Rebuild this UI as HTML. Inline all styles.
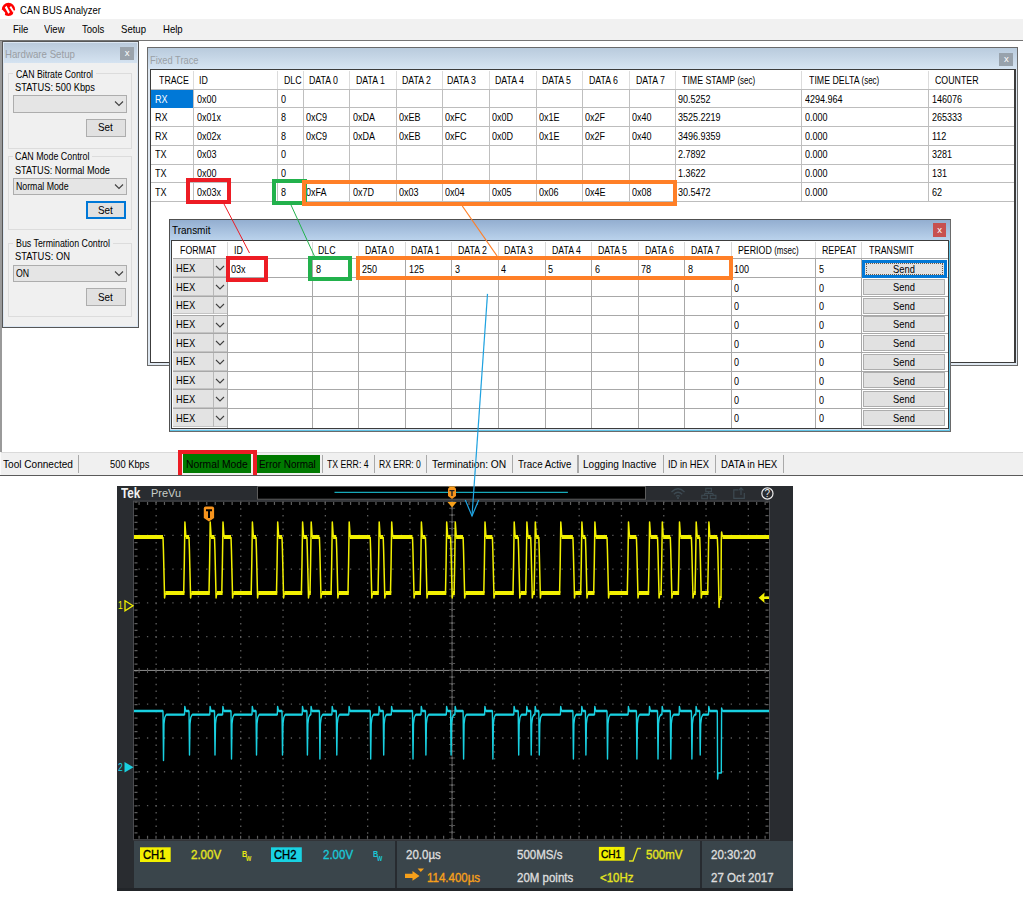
<!DOCTYPE html>
<html><head><meta charset="utf-8"><style>
html,body{margin:0;padding:0;width:1023px;height:899px;overflow:hidden;background:#fff;position:relative}
.t{position:absolute;white-space:nowrap;line-height:1;transform-origin:0 0;font-family:'Liberation Sans',sans-serif}
.r{position:absolute}
</style></head><body>
<div class="r" style="left:0.0px;top:0.0px;width:1023.0px;height:19.0px;background:#fff"></div>
<svg class="r" style="left:0;top:0" width="20" height="20" viewBox="0 0 20 20"><circle cx="8.45" cy="9.4" r="6.6" fill="#f00"/><g fill="#fff"><path d="M4.8,7.4 L6.5,5.8 L9.9,12.3 L8.4,13.7 Z"/><path d="M9.5,7.2 L11.1,5.9 L14.3,11.3 L13,12.4 Z"/><path d="M0.5,10.3 L2.4,9.8 L5.2,12.8 L4.6,16.5 L0.5,16.5 Z"/><path d="M14.6,10.2 L16.5,9.6 L16.5,16.5 L12.6,16.5 L13.2,12.6 Z"/></g></svg>
<div class="t" style="left:20.0px;top:5.3px;font-size:10.5px;transform:scaleX(0.9);color:#000;font-weight:normal;">CAN BUS Analyzer</div>
<div class="r" style="left:0.0px;top:19.0px;width:1023.0px;height:21.0px;background:#f1f1f1"></div>
<div class="t" style="left:12.5px;top:23.8px;font-size:11px;transform:scaleX(0.87);color:#000;font-weight:normal;">File</div>
<div class="t" style="left:44.0px;top:23.8px;font-size:11px;transform:scaleX(0.87);color:#000;font-weight:normal;">View</div>
<div class="t" style="left:81.5px;top:23.8px;font-size:11px;transform:scaleX(0.87);color:#000;font-weight:normal;">Tools</div>
<div class="t" style="left:121.0px;top:23.8px;font-size:11px;transform:scaleX(0.87);color:#000;font-weight:normal;">Setup</div>
<div class="t" style="left:162.8px;top:23.8px;font-size:11px;transform:scaleX(0.87);color:#000;font-weight:normal;">Help</div>
<div class="r" style="left:0.0px;top:40.0px;width:1023.0px;height:1.0px;background:#747474"></div>
<div class="r" style="left:0.0px;top:41.0px;width:1023.0px;height:411.0px;background:#fff"></div>
<div class="r" style="left:0.0px;top:41.0px;width:2.0px;height:411.0px;background:#9a9a9a"></div>
<div class="r" style="left:1.8px;top:41.0px;width:137.2px;height:286.8px;background:#f0f0f0;border:1px solid #565656;box-sizing:border-box"></div>
<div class="r" style="left:2.8px;top:42.0px;width:135.2px;height:284.8px;border:1px solid #dce7f3;border-top-width:1.2px;box-sizing:border-box"></div>
<div class="r" style="left:3.8px;top:43.2px;width:133.2px;height:20.3px;background:linear-gradient(#bacadb,#d5e3f1)"></div>
<div class="t" style="left:4.8px;top:48.8px;font-size:11px;transform:scaleX(0.88);color:#9a9ea3;font-weight:normal;">Hardware Setup</div>
<div class="r" style="left:120.0px;top:47.0px;width:13.5px;height:13.0px;background:#9aa3ac"></div>
<div class="t" style="left:124.8px;top:48.1px;font-size:9.5px;transform:scaleX(1);color:#fff;font-weight:normal;">x</div>
<div class="r" style="left:8.2px;top:73.4px;width:123.8px;height:75.6px;border:1px solid #dcdcdc;box-sizing:border-box"></div>
<div class="r" style="left:13.0px;top:67.4px;width:82.6px;height:12.0px;background:#f0f0f0"></div>
<div class="t" style="left:15.6px;top:68.6px;font-size:11px;transform:scaleX(0.796895213454075);color:#000;font-weight:normal;">CAN Bitrate Control</div>
<div class="t" style="left:15.3px;top:81.8px;font-size:11px;transform:scaleX(0.8471211118464593);color:#000;font-weight:normal;">STATUS: 500 Kbps</div>
<div class="r" style="left:13.0px;top:95.0px;width:114.0px;height:17.5px;background:#e5e5e5;border:1px solid #adadad;box-sizing:border-box"></div>
<svg class="r" style="left:114px;top:100px" width="10" height="7"><path d="M1 1.5 L5 5.5 L9 1.5" stroke="#404040" stroke-width="1.1" fill="none"/></svg>
<div class="r" style="left:86.0px;top:118.5px;width:40.0px;height:18.0px;background:#e1e1e1;border:1px solid #adadad;box-sizing:border-box"></div>
<div class="t" style="left:97.5px;top:122.3px;font-size:11px;transform:scaleX(0.9);color:#000;font-weight:normal;">Set</div>
<div class="r" style="left:8.2px;top:156.0px;width:123.8px;height:74.0px;border:1px solid #dcdcdc;box-sizing:border-box"></div>
<div class="r" style="left:13.0px;top:150.0px;width:79.3px;height:12.0px;background:#f0f0f0"></div>
<div class="t" style="left:14.8px;top:151.2px;font-size:11px;transform:scaleX(0.8067681895093063);color:#000;font-weight:normal;">CAN Mode Control</div>
<div class="t" style="left:14.8px;top:164.8px;font-size:11px;transform:scaleX(0.8329127811300056);color:#000;font-weight:normal;">STATUS: Normal Mode</div>
<div class="r" style="left:13.0px;top:177.5px;width:114.0px;height:17.5px;background:#e5e5e5;border:1px solid #adadad;box-sizing:border-box"></div>
<div class="t" style="left:16.0px;top:181.1px;font-size:11px;transform:scaleX(0.7965925224798864);color:#000;font-weight:normal;">Normal Mode</div>
<svg class="r" style="left:114px;top:182.5px" width="10" height="7"><path d="M1 1.5 L5 5.5 L9 1.5" stroke="#404040" stroke-width="1.1" fill="none"/></svg>
<div class="r" style="left:86.0px;top:201.0px;width:40.0px;height:18.0px;background:#e1e1e1;border:2px solid #0078d7;box-sizing:border-box"></div>
<div class="t" style="left:97.5px;top:204.8px;font-size:11px;transform:scaleX(0.9);color:#000;font-weight:normal;">Set</div>
<div class="r" style="left:8.2px;top:243.2px;width:123.8px;height:74.0px;border:1px solid #dcdcdc;box-sizing:border-box"></div>
<div class="r" style="left:13.0px;top:237.2px;width:99.6px;height:12.0px;background:#f0f0f0"></div>
<div class="t" style="left:15.6px;top:238.4px;font-size:11px;transform:scaleX(0.8018126082900173);color:#000;font-weight:normal;">Bus Termination Control</div>
<div class="t" style="left:14.7px;top:251.4px;font-size:11px;transform:scaleX(0.853954391072295);color:#000;font-weight:normal;">STATUS: ON</div>
<div class="r" style="left:13.0px;top:264.8px;width:114.0px;height:17.5px;background:#e5e5e5;border:1px solid #adadad;box-sizing:border-box"></div>
<div class="t" style="left:16.0px;top:268.4px;font-size:11px;transform:scaleX(0.7965925224798864);color:#000;font-weight:normal;">ON</div>
<svg class="r" style="left:114px;top:269.8px" width="10" height="7"><path d="M1 1.5 L5 5.5 L9 1.5" stroke="#404040" stroke-width="1.1" fill="none"/></svg>
<div class="r" style="left:86.0px;top:288.3px;width:40.0px;height:18.0px;background:#e1e1e1;border:1px solid #adadad;box-sizing:border-box"></div>
<div class="t" style="left:97.5px;top:292.1px;font-size:11px;transform:scaleX(0.9);color:#000;font-weight:normal;">Set</div>
<div class="r" style="left:147.3px;top:47.3px;width:870.5px;height:318.7px;background:#dfe8f1;border:1px solid #6a6a6a;box-sizing:border-box"></div>
<div class="r" style="left:148.3px;top:48.3px;width:868.5px;height:21.0px;background:linear-gradient(#b9cbdd,#d6e4f2)"></div>
<div class="t" style="left:150.0px;top:54.8px;font-size:11px;transform:scaleX(0.8437075292198967);color:#9aa0a6;font-weight:normal;">Fixed Trace</div>
<div class="r" style="left:999.3px;top:52.7px;width:13.6px;height:13.0px;background:#98a2ac"></div>
<div class="t" style="left:1004.0px;top:53.9px;font-size:9.5px;transform:scaleX(1);color:#fff;font-weight:normal;">x</div>
<div class="r" style="left:149.5px;top:69.3px;width:866.5px;height:293.7px;background:#fff;border:1.5px solid #3c3c3c;border-right-width:2px;box-sizing:border-box"></div>
<div class="r" style="left:192.7px;top:71.0px;width:1.0px;height:18.0px;background:#dcdcdc"></div>
<div class="r" style="left:192.7px;top:89.0px;width:1.0px;height:112.9px;background:#bfbfbf"></div>
<div class="r" style="left:277.1px;top:71.0px;width:1.0px;height:18.0px;background:#dcdcdc"></div>
<div class="r" style="left:277.1px;top:89.0px;width:1.0px;height:112.9px;background:#bfbfbf"></div>
<div class="r" style="left:302.5px;top:71.0px;width:1.0px;height:18.0px;background:#dcdcdc"></div>
<div class="r" style="left:302.5px;top:89.0px;width:1.0px;height:112.9px;background:#bfbfbf"></div>
<div class="r" style="left:349.1px;top:71.0px;width:1.0px;height:18.0px;background:#dcdcdc"></div>
<div class="r" style="left:349.1px;top:89.0px;width:1.0px;height:112.9px;background:#bfbfbf"></div>
<div class="r" style="left:395.7px;top:71.0px;width:1.0px;height:18.0px;background:#dcdcdc"></div>
<div class="r" style="left:395.7px;top:89.0px;width:1.0px;height:112.9px;background:#bfbfbf"></div>
<div class="r" style="left:442.3px;top:71.0px;width:1.0px;height:18.0px;background:#dcdcdc"></div>
<div class="r" style="left:442.3px;top:89.0px;width:1.0px;height:112.9px;background:#bfbfbf"></div>
<div class="r" style="left:488.9px;top:71.0px;width:1.0px;height:18.0px;background:#dcdcdc"></div>
<div class="r" style="left:488.9px;top:89.0px;width:1.0px;height:112.9px;background:#bfbfbf"></div>
<div class="r" style="left:535.5px;top:71.0px;width:1.0px;height:18.0px;background:#dcdcdc"></div>
<div class="r" style="left:535.5px;top:89.0px;width:1.0px;height:112.9px;background:#bfbfbf"></div>
<div class="r" style="left:582.1px;top:71.0px;width:1.0px;height:18.0px;background:#dcdcdc"></div>
<div class="r" style="left:582.1px;top:89.0px;width:1.0px;height:112.9px;background:#bfbfbf"></div>
<div class="r" style="left:628.7px;top:71.0px;width:1.0px;height:18.0px;background:#dcdcdc"></div>
<div class="r" style="left:628.7px;top:89.0px;width:1.0px;height:112.9px;background:#bfbfbf"></div>
<div class="r" style="left:674.8px;top:71.0px;width:1.0px;height:18.0px;background:#dcdcdc"></div>
<div class="r" style="left:674.8px;top:89.0px;width:1.0px;height:112.9px;background:#bfbfbf"></div>
<div class="r" style="left:801.2px;top:71.0px;width:1.0px;height:18.0px;background:#dcdcdc"></div>
<div class="r" style="left:801.2px;top:89.0px;width:1.0px;height:112.9px;background:#bfbfbf"></div>
<div class="r" style="left:928.0px;top:71.0px;width:1.0px;height:18.0px;background:#dcdcdc"></div>
<div class="r" style="left:928.0px;top:89.0px;width:1.0px;height:112.9px;background:#bfbfbf"></div>
<div class="r" style="left:151.0px;top:88.7px;width:863.3px;height:1.0px;background:#bdbdbd"></div>
<div class="r" style="left:151.0px;top:107.4px;width:863.3px;height:1.0px;background:#bdbdbd"></div>
<div class="r" style="left:151.0px;top:126.1px;width:863.3px;height:1.0px;background:#bdbdbd"></div>
<div class="r" style="left:151.0px;top:144.8px;width:863.3px;height:1.0px;background:#bdbdbd"></div>
<div class="r" style="left:151.0px;top:163.5px;width:863.3px;height:1.0px;background:#bdbdbd"></div>
<div class="r" style="left:151.0px;top:182.2px;width:863.3px;height:1.0px;background:#bdbdbd"></div>
<div class="r" style="left:151.0px;top:200.9px;width:863.3px;height:1.0px;background:#bdbdbd"></div>
<div class="t" style="left:158.5px;top:75.1px;font-size:11px;transform:scaleX(0.8);color:#000;font-weight:normal;">TRACE</div>
<div class="t" style="left:199.4px;top:75.1px;font-size:11px;transform:scaleX(0.8);color:#000;font-weight:normal;">ID</div>
<div class="t" style="left:283.9px;top:75.1px;font-size:11px;transform:scaleX(0.8);color:#000;font-weight:normal;">DLC</div>
<div class="t" style="left:308.9px;top:75.1px;font-size:11px;transform:scaleX(0.8);color:#000;font-weight:normal;">DATA 0</div>
<div class="t" style="left:356.2px;top:75.1px;font-size:11px;transform:scaleX(0.8);color:#000;font-weight:normal;">DATA 1</div>
<div class="t" style="left:402.0px;top:75.1px;font-size:11px;transform:scaleX(0.8);color:#000;font-weight:normal;">DATA 2</div>
<div class="t" style="left:446.9px;top:75.1px;font-size:11px;transform:scaleX(0.8);color:#000;font-weight:normal;">DATA 3</div>
<div class="t" style="left:495.0px;top:75.1px;font-size:11px;transform:scaleX(0.8);color:#000;font-weight:normal;">DATA 4</div>
<div class="t" style="left:542.1px;top:75.1px;font-size:11px;transform:scaleX(0.8);color:#000;font-weight:normal;">DATA 5</div>
<div class="t" style="left:588.8px;top:75.1px;font-size:11px;transform:scaleX(0.8);color:#000;font-weight:normal;">DATA 6</div>
<div class="t" style="left:635.5px;top:75.1px;font-size:11px;transform:scaleX(0.8);color:#000;font-weight:normal;">DATA 7</div>
<div class="t" style="left:682.2px;top:75.1px;font-size:11px;transform:scaleX(0.8);color:#000;font-weight:normal;">TIME STAMP <span style="font-size:10px">(sec)</span></div>
<div class="t" style="left:808.6px;top:75.1px;font-size:11px;transform:scaleX(0.8);color:#000;font-weight:normal;">TIME DELTA <span style="font-size:10px">(sec)</span></div>
<div class="t" style="left:935.2px;top:75.1px;font-size:11px;transform:scaleX(0.8);color:#000;font-weight:normal;">COUNTER</div>
<div class="r" style="left:151.3px;top:90.0px;width:41.7px;height:17.5px;background:#0078d7"></div>
<div class="t" style="left:154.5px;top:93.5px;font-size:11px;transform:scaleX(0.82);color:#fff;font-weight:normal;">RX</div>
<div class="t" style="left:196.7px;top:93.5px;font-size:11px;transform:scaleX(0.82);color:#000;font-weight:normal;">0x00</div>
<div class="t" style="left:280.8px;top:93.5px;font-size:11px;transform:scaleX(0.82);color:#000;font-weight:normal;">0</div>
<div class="t" style="left:678.3px;top:93.5px;font-size:11px;transform:scaleX(0.82);color:#000;font-weight:normal;">90.5252</div>
<div class="t" style="left:805.2px;top:93.5px;font-size:11px;transform:scaleX(0.82);color:#000;font-weight:normal;">4294.964</div>
<div class="t" style="left:932.0px;top:93.5px;font-size:11px;transform:scaleX(0.82);color:#000;font-weight:normal;">146076</div>
<div class="t" style="left:154.5px;top:112.2px;font-size:11px;transform:scaleX(0.82);color:#000;font-weight:normal;">RX</div>
<div class="t" style="left:196.7px;top:112.2px;font-size:11px;transform:scaleX(0.82);color:#000;font-weight:normal;">0x01x</div>
<div class="t" style="left:280.8px;top:112.2px;font-size:11px;transform:scaleX(0.82);color:#000;font-weight:normal;">8</div>
<div class="t" style="left:306.2px;top:112.2px;font-size:11px;transform:scaleX(0.82);color:#000;font-weight:normal;">0xC9</div>
<div class="t" style="left:353.1px;top:112.2px;font-size:11px;transform:scaleX(0.82);color:#000;font-weight:normal;">0xDA</div>
<div class="t" style="left:399.2px;top:112.2px;font-size:11px;transform:scaleX(0.82);color:#000;font-weight:normal;">0xEB</div>
<div class="t" style="left:445.0px;top:112.2px;font-size:11px;transform:scaleX(0.82);color:#000;font-weight:normal;">0xFC</div>
<div class="t" style="left:491.9px;top:112.2px;font-size:11px;transform:scaleX(0.82);color:#000;font-weight:normal;">0x0D</div>
<div class="t" style="left:538.7px;top:112.2px;font-size:11px;transform:scaleX(0.82);color:#000;font-weight:normal;">0x1E</div>
<div class="t" style="left:585.4px;top:112.2px;font-size:11px;transform:scaleX(0.82);color:#000;font-weight:normal;">0x2F</div>
<div class="t" style="left:632.1px;top:112.2px;font-size:11px;transform:scaleX(0.82);color:#000;font-weight:normal;">0x40</div>
<div class="t" style="left:678.3px;top:112.2px;font-size:11px;transform:scaleX(0.82);color:#000;font-weight:normal;">3525.2219</div>
<div class="t" style="left:805.2px;top:112.2px;font-size:11px;transform:scaleX(0.82);color:#000;font-weight:normal;">0.000</div>
<div class="t" style="left:932.0px;top:112.2px;font-size:11px;transform:scaleX(0.82);color:#000;font-weight:normal;">265333</div>
<div class="t" style="left:154.5px;top:130.7px;font-size:11px;transform:scaleX(0.82);color:#000;font-weight:normal;">RX</div>
<div class="t" style="left:196.7px;top:130.7px;font-size:11px;transform:scaleX(0.82);color:#000;font-weight:normal;">0x02x</div>
<div class="t" style="left:280.8px;top:130.7px;font-size:11px;transform:scaleX(0.82);color:#000;font-weight:normal;">8</div>
<div class="t" style="left:306.2px;top:130.7px;font-size:11px;transform:scaleX(0.82);color:#000;font-weight:normal;">0xC9</div>
<div class="t" style="left:353.1px;top:130.7px;font-size:11px;transform:scaleX(0.82);color:#000;font-weight:normal;">0xDA</div>
<div class="t" style="left:399.2px;top:130.7px;font-size:11px;transform:scaleX(0.82);color:#000;font-weight:normal;">0xEB</div>
<div class="t" style="left:445.0px;top:130.7px;font-size:11px;transform:scaleX(0.82);color:#000;font-weight:normal;">0xFC</div>
<div class="t" style="left:491.9px;top:130.7px;font-size:11px;transform:scaleX(0.82);color:#000;font-weight:normal;">0x0D</div>
<div class="t" style="left:538.7px;top:130.7px;font-size:11px;transform:scaleX(0.82);color:#000;font-weight:normal;">0x1E</div>
<div class="t" style="left:585.4px;top:130.7px;font-size:11px;transform:scaleX(0.82);color:#000;font-weight:normal;">0x2F</div>
<div class="t" style="left:632.1px;top:130.7px;font-size:11px;transform:scaleX(0.82);color:#000;font-weight:normal;">0x40</div>
<div class="t" style="left:678.3px;top:130.7px;font-size:11px;transform:scaleX(0.82);color:#000;font-weight:normal;">3496.9359</div>
<div class="t" style="left:805.2px;top:130.7px;font-size:11px;transform:scaleX(0.82);color:#000;font-weight:normal;">0.000</div>
<div class="t" style="left:932.0px;top:130.7px;font-size:11px;transform:scaleX(0.82);color:#000;font-weight:normal;">112</div>
<div class="t" style="left:154.5px;top:149.4px;font-size:11px;transform:scaleX(0.82);color:#000;font-weight:normal;">TX</div>
<div class="t" style="left:196.7px;top:149.4px;font-size:11px;transform:scaleX(0.82);color:#000;font-weight:normal;">0x03</div>
<div class="t" style="left:280.8px;top:149.4px;font-size:11px;transform:scaleX(0.82);color:#000;font-weight:normal;">0</div>
<div class="t" style="left:678.3px;top:149.4px;font-size:11px;transform:scaleX(0.82);color:#000;font-weight:normal;">2.7892</div>
<div class="t" style="left:805.2px;top:149.4px;font-size:11px;transform:scaleX(0.82);color:#000;font-weight:normal;">0.000</div>
<div class="t" style="left:932.0px;top:149.4px;font-size:11px;transform:scaleX(0.82);color:#000;font-weight:normal;">3281</div>
<div class="t" style="left:154.5px;top:168.0px;font-size:11px;transform:scaleX(0.82);color:#000;font-weight:normal;">TX</div>
<div class="t" style="left:196.7px;top:168.0px;font-size:11px;transform:scaleX(0.82);color:#000;font-weight:normal;">0x00</div>
<div class="t" style="left:280.8px;top:168.0px;font-size:11px;transform:scaleX(0.82);color:#000;font-weight:normal;">0</div>
<div class="t" style="left:678.3px;top:168.0px;font-size:11px;transform:scaleX(0.82);color:#000;font-weight:normal;">1.3622</div>
<div class="t" style="left:805.2px;top:168.0px;font-size:11px;transform:scaleX(0.82);color:#000;font-weight:normal;">0.000</div>
<div class="t" style="left:932.0px;top:168.0px;font-size:11px;transform:scaleX(0.82);color:#000;font-weight:normal;">131</div>
<div class="t" style="left:154.5px;top:186.6px;font-size:11px;transform:scaleX(0.82);color:#000;font-weight:normal;">TX</div>
<div class="t" style="left:196.7px;top:186.6px;font-size:11px;transform:scaleX(0.82);color:#000;font-weight:normal;">0x03x</div>
<div class="t" style="left:280.8px;top:186.6px;font-size:11px;transform:scaleX(0.82);color:#000;font-weight:normal;">8</div>
<div class="t" style="left:306.2px;top:186.6px;font-size:11px;transform:scaleX(0.82);color:#000;font-weight:normal;">0xFA</div>
<div class="t" style="left:353.1px;top:186.6px;font-size:11px;transform:scaleX(0.82);color:#000;font-weight:normal;">0x7D</div>
<div class="t" style="left:399.2px;top:186.6px;font-size:11px;transform:scaleX(0.82);color:#000;font-weight:normal;">0x03</div>
<div class="t" style="left:445.0px;top:186.6px;font-size:11px;transform:scaleX(0.82);color:#000;font-weight:normal;">0x04</div>
<div class="t" style="left:491.9px;top:186.6px;font-size:11px;transform:scaleX(0.82);color:#000;font-weight:normal;">0x05</div>
<div class="t" style="left:538.7px;top:186.6px;font-size:11px;transform:scaleX(0.82);color:#000;font-weight:normal;">0x06</div>
<div class="t" style="left:585.4px;top:186.6px;font-size:11px;transform:scaleX(0.82);color:#000;font-weight:normal;">0x4E</div>
<div class="t" style="left:632.1px;top:186.6px;font-size:11px;transform:scaleX(0.82);color:#000;font-weight:normal;">0x08</div>
<div class="t" style="left:678.3px;top:186.6px;font-size:11px;transform:scaleX(0.82);color:#000;font-weight:normal;">30.5472</div>
<div class="t" style="left:805.2px;top:186.6px;font-size:11px;transform:scaleX(0.82);color:#000;font-weight:normal;">0.000</div>
<div class="t" style="left:932.0px;top:186.6px;font-size:11px;transform:scaleX(0.82);color:#000;font-weight:normal;">62</div>
<div class="r" style="left:169.0px;top:218.5px;width:782.0px;height:213.5px;background:#cfe0f0;border:1px solid #505050;border-bottom-color:#6a6a6a;border-right-color:#6a6a6a;box-sizing:border-box"></div>
<div class="r" style="left:949.0px;top:240.0px;width:1.0px;height:191.0px;background:#62c4e6"></div>
<div class="r" style="left:170.0px;top:429.8px;width:780.0px;height:1.1px;background:#62c4e6"></div>
<div class="r" style="left:170.0px;top:219.5px;width:780.0px;height:21.0px;background:linear-gradient(#93aed0,#bcd4ed)"></div>
<div class="t" style="left:172.0px;top:225.4px;font-size:11px;transform:scaleX(0.9061946902654867);color:#000;font-weight:normal;">Transmit</div>
<div class="r" style="left:932.8px;top:223.0px;width:13.2px;height:14.0px;background:#c75050"></div>
<div class="t" style="left:937.3px;top:224.7px;font-size:9.5px;transform:scaleX(1);color:#fff;font-weight:normal;">x</div>
<div class="r" style="left:171.3px;top:240.3px;width:777.4px;height:188.7px;background:#fff;border:1.5px solid #3c3c3c;box-sizing:border-box"></div>
<div class="r" style="left:173.0px;top:259.4px;width:54.3px;height:17.7px;background:#e3e3e3;border-bottom:1px solid #c4c4c4;box-sizing:border-box"></div>
<div class="r" style="left:213.0px;top:259.4px;width:1.0px;height:17.7px;background:#b8b8b8"></div>
<div class="t" style="left:176.0px;top:262.9px;font-size:11px;transform:scaleX(0.85);color:#000;font-weight:normal;">HEX</div>
<svg class="r" style="left:215px;top:265.4px" width="10" height="6"><path d="M1 1 L5 5 L9 1" stroke="#404040" stroke-width="1.1" fill="none"/></svg>
<div class="r" style="left:863.4px;top:260.2px;width:81.4px;height:16.1px;background:#e1e1e1;border:1px solid #adadad;box-sizing:border-box"></div>
<div class="t" style="left:892.5px;top:263.3px;font-size:11px;transform:scaleX(0.85);color:#000;font-weight:normal;">Send</div>
<div class="r" style="left:173.0px;top:278.1px;width:54.3px;height:17.7px;background:#e3e3e3;border-bottom:1px solid #c4c4c4;box-sizing:border-box"></div>
<div class="r" style="left:213.0px;top:278.1px;width:1.0px;height:17.7px;background:#b8b8b8"></div>
<div class="t" style="left:176.0px;top:281.6px;font-size:11px;transform:scaleX(0.85);color:#000;font-weight:normal;">HEX</div>
<svg class="r" style="left:215px;top:284.1px" width="10" height="6"><path d="M1 1 L5 5 L9 1" stroke="#404040" stroke-width="1.1" fill="none"/></svg>
<div class="r" style="left:863.4px;top:278.9px;width:81.4px;height:16.1px;background:#e1e1e1;border:1px solid #adadad;box-sizing:border-box"></div>
<div class="t" style="left:892.5px;top:282.0px;font-size:11px;transform:scaleX(0.85);color:#000;font-weight:normal;">Send</div>
<div class="r" style="left:173.0px;top:296.8px;width:54.3px;height:17.7px;background:#e3e3e3;border-bottom:1px solid #c4c4c4;box-sizing:border-box"></div>
<div class="r" style="left:213.0px;top:296.8px;width:1.0px;height:17.7px;background:#b8b8b8"></div>
<div class="t" style="left:176.0px;top:300.3px;font-size:11px;transform:scaleX(0.85);color:#000;font-weight:normal;">HEX</div>
<svg class="r" style="left:215px;top:302.8px" width="10" height="6"><path d="M1 1 L5 5 L9 1" stroke="#404040" stroke-width="1.1" fill="none"/></svg>
<div class="r" style="left:863.4px;top:297.6px;width:81.4px;height:16.1px;background:#e1e1e1;border:1px solid #adadad;box-sizing:border-box"></div>
<div class="t" style="left:892.5px;top:300.7px;font-size:11px;transform:scaleX(0.85);color:#000;font-weight:normal;">Send</div>
<div class="r" style="left:173.0px;top:315.5px;width:54.3px;height:17.7px;background:#e3e3e3;border-bottom:1px solid #c4c4c4;box-sizing:border-box"></div>
<div class="r" style="left:213.0px;top:315.5px;width:1.0px;height:17.7px;background:#b8b8b8"></div>
<div class="t" style="left:176.0px;top:319.0px;font-size:11px;transform:scaleX(0.85);color:#000;font-weight:normal;">HEX</div>
<svg class="r" style="left:215px;top:321.5px" width="10" height="6"><path d="M1 1 L5 5 L9 1" stroke="#404040" stroke-width="1.1" fill="none"/></svg>
<div class="r" style="left:863.4px;top:316.3px;width:81.4px;height:16.1px;background:#e1e1e1;border:1px solid #adadad;box-sizing:border-box"></div>
<div class="t" style="left:892.5px;top:319.4px;font-size:11px;transform:scaleX(0.85);color:#000;font-weight:normal;">Send</div>
<div class="r" style="left:173.0px;top:334.2px;width:54.3px;height:17.7px;background:#e3e3e3;border-bottom:1px solid #c4c4c4;box-sizing:border-box"></div>
<div class="r" style="left:213.0px;top:334.2px;width:1.0px;height:17.7px;background:#b8b8b8"></div>
<div class="t" style="left:176.0px;top:337.7px;font-size:11px;transform:scaleX(0.85);color:#000;font-weight:normal;">HEX</div>
<svg class="r" style="left:215px;top:340.2px" width="10" height="6"><path d="M1 1 L5 5 L9 1" stroke="#404040" stroke-width="1.1" fill="none"/></svg>
<div class="r" style="left:863.4px;top:335.0px;width:81.4px;height:16.1px;background:#e1e1e1;border:1px solid #adadad;box-sizing:border-box"></div>
<div class="t" style="left:892.5px;top:338.1px;font-size:11px;transform:scaleX(0.85);color:#000;font-weight:normal;">Send</div>
<div class="r" style="left:173.0px;top:352.9px;width:54.3px;height:17.7px;background:#e3e3e3;border-bottom:1px solid #c4c4c4;box-sizing:border-box"></div>
<div class="r" style="left:213.0px;top:352.9px;width:1.0px;height:17.7px;background:#b8b8b8"></div>
<div class="t" style="left:176.0px;top:356.4px;font-size:11px;transform:scaleX(0.85);color:#000;font-weight:normal;">HEX</div>
<svg class="r" style="left:215px;top:358.9px" width="10" height="6"><path d="M1 1 L5 5 L9 1" stroke="#404040" stroke-width="1.1" fill="none"/></svg>
<div class="r" style="left:863.4px;top:353.7px;width:81.4px;height:16.1px;background:#e1e1e1;border:1px solid #adadad;box-sizing:border-box"></div>
<div class="t" style="left:892.5px;top:356.8px;font-size:11px;transform:scaleX(0.85);color:#000;font-weight:normal;">Send</div>
<div class="r" style="left:173.0px;top:371.6px;width:54.3px;height:17.7px;background:#e3e3e3;border-bottom:1px solid #c4c4c4;box-sizing:border-box"></div>
<div class="r" style="left:213.0px;top:371.6px;width:1.0px;height:17.7px;background:#b8b8b8"></div>
<div class="t" style="left:176.0px;top:375.1px;font-size:11px;transform:scaleX(0.85);color:#000;font-weight:normal;">HEX</div>
<svg class="r" style="left:215px;top:377.6px" width="10" height="6"><path d="M1 1 L5 5 L9 1" stroke="#404040" stroke-width="1.1" fill="none"/></svg>
<div class="r" style="left:863.4px;top:372.4px;width:81.4px;height:16.1px;background:#e1e1e1;border:1px solid #adadad;box-sizing:border-box"></div>
<div class="t" style="left:892.5px;top:375.5px;font-size:11px;transform:scaleX(0.85);color:#000;font-weight:normal;">Send</div>
<div class="r" style="left:173.0px;top:390.3px;width:54.3px;height:17.7px;background:#e3e3e3;border-bottom:1px solid #c4c4c4;box-sizing:border-box"></div>
<div class="r" style="left:213.0px;top:390.3px;width:1.0px;height:17.7px;background:#b8b8b8"></div>
<div class="t" style="left:176.0px;top:393.8px;font-size:11px;transform:scaleX(0.85);color:#000;font-weight:normal;">HEX</div>
<svg class="r" style="left:215px;top:396.3px" width="10" height="6"><path d="M1 1 L5 5 L9 1" stroke="#404040" stroke-width="1.1" fill="none"/></svg>
<div class="r" style="left:863.4px;top:391.1px;width:81.4px;height:16.1px;background:#e1e1e1;border:1px solid #adadad;box-sizing:border-box"></div>
<div class="t" style="left:892.5px;top:394.2px;font-size:11px;transform:scaleX(0.85);color:#000;font-weight:normal;">Send</div>
<div class="r" style="left:173.0px;top:409.0px;width:54.3px;height:17.7px;background:#e3e3e3;border-bottom:1px solid #c4c4c4;box-sizing:border-box"></div>
<div class="r" style="left:213.0px;top:409.0px;width:1.0px;height:17.7px;background:#b8b8b8"></div>
<div class="t" style="left:176.0px;top:412.5px;font-size:11px;transform:scaleX(0.85);color:#000;font-weight:normal;">HEX</div>
<svg class="r" style="left:215px;top:415.0px" width="10" height="6"><path d="M1 1 L5 5 L9 1" stroke="#404040" stroke-width="1.1" fill="none"/></svg>
<div class="r" style="left:863.4px;top:409.8px;width:81.4px;height:16.1px;background:#e1e1e1;border:1px solid #adadad;box-sizing:border-box"></div>
<div class="t" style="left:892.5px;top:412.9px;font-size:11px;transform:scaleX(0.85);color:#000;font-weight:normal;">Send</div>
<div class="r" style="left:226.8px;top:241.5px;width:1.0px;height:17.1px;background:#d8d8d8"></div>
<div class="r" style="left:226.8px;top:258.6px;width:1.0px;height:169.0px;background:#a8a8a8"></div>
<div class="r" style="left:312.0px;top:241.5px;width:1.0px;height:17.1px;background:#d8d8d8"></div>
<div class="r" style="left:312.0px;top:258.6px;width:1.0px;height:169.0px;background:#a8a8a8"></div>
<div class="r" style="left:358.1px;top:241.5px;width:1.0px;height:17.1px;background:#d8d8d8"></div>
<div class="r" style="left:358.1px;top:258.6px;width:1.0px;height:169.0px;background:#a8a8a8"></div>
<div class="r" style="left:404.7px;top:241.5px;width:1.0px;height:17.1px;background:#d8d8d8"></div>
<div class="r" style="left:404.7px;top:258.6px;width:1.0px;height:169.0px;background:#a8a8a8"></div>
<div class="r" style="left:451.3px;top:241.5px;width:1.0px;height:17.1px;background:#d8d8d8"></div>
<div class="r" style="left:451.3px;top:258.6px;width:1.0px;height:169.0px;background:#a8a8a8"></div>
<div class="r" style="left:497.9px;top:241.5px;width:1.0px;height:17.1px;background:#d8d8d8"></div>
<div class="r" style="left:497.9px;top:258.6px;width:1.0px;height:169.0px;background:#a8a8a8"></div>
<div class="r" style="left:544.5px;top:241.5px;width:1.0px;height:17.1px;background:#d8d8d8"></div>
<div class="r" style="left:544.5px;top:258.6px;width:1.0px;height:169.0px;background:#a8a8a8"></div>
<div class="r" style="left:591.1px;top:241.5px;width:1.0px;height:17.1px;background:#d8d8d8"></div>
<div class="r" style="left:591.1px;top:258.6px;width:1.0px;height:169.0px;background:#a8a8a8"></div>
<div class="r" style="left:637.7px;top:241.5px;width:1.0px;height:17.1px;background:#d8d8d8"></div>
<div class="r" style="left:637.7px;top:258.6px;width:1.0px;height:169.0px;background:#a8a8a8"></div>
<div class="r" style="left:684.3px;top:241.5px;width:1.0px;height:17.1px;background:#d8d8d8"></div>
<div class="r" style="left:684.3px;top:258.6px;width:1.0px;height:169.0px;background:#a8a8a8"></div>
<div class="r" style="left:730.9px;top:241.5px;width:1.0px;height:17.1px;background:#d8d8d8"></div>
<div class="r" style="left:730.9px;top:258.6px;width:1.0px;height:169.0px;background:#a8a8a8"></div>
<div class="r" style="left:814.8px;top:241.5px;width:1.0px;height:17.1px;background:#d8d8d8"></div>
<div class="r" style="left:814.8px;top:258.6px;width:1.0px;height:169.0px;background:#a8a8a8"></div>
<div class="r" style="left:861.3px;top:241.5px;width:1.0px;height:17.1px;background:#d8d8d8"></div>
<div class="r" style="left:861.3px;top:258.6px;width:1.0px;height:169.0px;background:#a8a8a8"></div>
<div class="r" style="left:173.0px;top:258.4px;width:775.0px;height:1.0px;background:#a8a8a8"></div>
<div class="r" style="left:173.0px;top:277.1px;width:775.0px;height:1.0px;background:#a8a8a8"></div>
<div class="r" style="left:173.0px;top:295.8px;width:775.0px;height:1.0px;background:#a8a8a8"></div>
<div class="r" style="left:173.0px;top:314.5px;width:775.0px;height:1.0px;background:#a8a8a8"></div>
<div class="r" style="left:173.0px;top:333.2px;width:775.0px;height:1.0px;background:#a8a8a8"></div>
<div class="r" style="left:173.0px;top:351.9px;width:775.0px;height:1.0px;background:#a8a8a8"></div>
<div class="r" style="left:173.0px;top:370.6px;width:775.0px;height:1.0px;background:#a8a8a8"></div>
<div class="r" style="left:173.0px;top:389.3px;width:775.0px;height:1.0px;background:#a8a8a8"></div>
<div class="r" style="left:173.0px;top:408.0px;width:775.0px;height:1.0px;background:#a8a8a8"></div>
<div class="r" style="left:861.8px;top:259.8px;width:84.8px;height:18.4px;background:#e1e1e1;border:3px solid #0078d7;box-sizing:border-box"></div>
<div class="r" style="left:865.5px;top:263.3px;width:77.5px;height:11.3px;border:1px dotted #6a5a4a;box-sizing:border-box"></div>
<div class="t" style="left:892.5px;top:263.8px;font-size:11px;transform:scaleX(0.85);color:#000;font-weight:normal;">Send</div>
<div class="t" style="left:180.3px;top:245.4px;font-size:11px;transform:scaleX(0.8);color:#000;font-weight:normal;">FORMAT</div>
<div class="t" style="left:233.5px;top:245.4px;font-size:11px;transform:scaleX(0.8);color:#000;font-weight:normal;">ID</div>
<div class="t" style="left:318.4px;top:245.4px;font-size:11px;transform:scaleX(0.8);color:#000;font-weight:normal;">DLC</div>
<div class="t" style="left:365.3px;top:245.4px;font-size:11px;transform:scaleX(0.8);color:#000;font-weight:normal;">DATA 0</div>
<div class="t" style="left:411.4px;top:245.4px;font-size:11px;transform:scaleX(0.8);color:#000;font-weight:normal;">DATA 1</div>
<div class="t" style="left:458.0px;top:245.4px;font-size:11px;transform:scaleX(0.8);color:#000;font-weight:normal;">DATA 2</div>
<div class="t" style="left:504.0px;top:245.4px;font-size:11px;transform:scaleX(0.8);color:#000;font-weight:normal;">DATA 3</div>
<div class="t" style="left:552.0px;top:245.4px;font-size:11px;transform:scaleX(0.8);color:#000;font-weight:normal;">DATA 4</div>
<div class="t" style="left:598.1px;top:245.4px;font-size:11px;transform:scaleX(0.8);color:#000;font-weight:normal;">DATA 5</div>
<div class="t" style="left:644.6px;top:245.4px;font-size:11px;transform:scaleX(0.8);color:#000;font-weight:normal;">DATA 6</div>
<div class="t" style="left:691.1px;top:245.4px;font-size:11px;transform:scaleX(0.8);color:#000;font-weight:normal;">DATA 7</div>
<div class="t" style="left:737.6px;top:245.4px;font-size:11px;transform:scaleX(0.8);color:#000;font-weight:normal;">PERIOD <span style="font-size:10px">(msec)</span></div>
<div class="t" style="left:821.7px;top:245.4px;font-size:11px;transform:scaleX(0.8);color:#000;font-weight:normal;">REPEAT</div>
<div class="t" style="left:868.6px;top:245.4px;font-size:11px;transform:scaleX(0.8);color:#000;font-weight:normal;">TRANSMIT</div>
<div class="t" style="left:231.2px;top:263.8px;font-size:11px;transform:scaleX(0.82);color:#000;font-weight:normal;">03x</div>
<div class="t" style="left:315.6px;top:263.8px;font-size:11px;transform:scaleX(0.82);color:#000;font-weight:normal;">8</div>
<div class="t" style="left:362.2px;top:263.8px;font-size:11px;transform:scaleX(0.82);color:#000;font-weight:normal;">250</div>
<div class="t" style="left:409.0px;top:263.8px;font-size:11px;transform:scaleX(0.82);color:#000;font-weight:normal;">125</div>
<div class="t" style="left:455.2px;top:263.8px;font-size:11px;transform:scaleX(0.82);color:#000;font-weight:normal;">3</div>
<div class="t" style="left:501.3px;top:263.8px;font-size:11px;transform:scaleX(0.82);color:#000;font-weight:normal;">4</div>
<div class="t" style="left:548.3px;top:263.8px;font-size:11px;transform:scaleX(0.82);color:#000;font-weight:normal;">5</div>
<div class="t" style="left:594.9px;top:263.8px;font-size:11px;transform:scaleX(0.82);color:#000;font-weight:normal;">6</div>
<div class="t" style="left:641.4px;top:263.8px;font-size:11px;transform:scaleX(0.82);color:#000;font-weight:normal;">78</div>
<div class="t" style="left:688.3px;top:263.8px;font-size:11px;transform:scaleX(0.82);color:#000;font-weight:normal;">8</div>
<div class="t" style="left:734.4px;top:263.8px;font-size:11px;transform:scaleX(0.82);color:#000;font-weight:normal;">100</div>
<div class="t" style="left:819.3px;top:263.8px;font-size:11px;transform:scaleX(0.82);color:#000;font-weight:normal;">5</div>
<div class="t" style="left:734.4px;top:282.5px;font-size:11px;transform:scaleX(0.82);color:#000;font-weight:normal;">0</div>
<div class="t" style="left:819.3px;top:282.5px;font-size:11px;transform:scaleX(0.82);color:#000;font-weight:normal;">0</div>
<div class="t" style="left:734.4px;top:301.2px;font-size:11px;transform:scaleX(0.82);color:#000;font-weight:normal;">0</div>
<div class="t" style="left:819.3px;top:301.2px;font-size:11px;transform:scaleX(0.82);color:#000;font-weight:normal;">0</div>
<div class="t" style="left:734.4px;top:319.9px;font-size:11px;transform:scaleX(0.82);color:#000;font-weight:normal;">0</div>
<div class="t" style="left:819.3px;top:319.9px;font-size:11px;transform:scaleX(0.82);color:#000;font-weight:normal;">0</div>
<div class="t" style="left:734.4px;top:338.6px;font-size:11px;transform:scaleX(0.82);color:#000;font-weight:normal;">0</div>
<div class="t" style="left:819.3px;top:338.6px;font-size:11px;transform:scaleX(0.82);color:#000;font-weight:normal;">0</div>
<div class="t" style="left:734.4px;top:357.3px;font-size:11px;transform:scaleX(0.82);color:#000;font-weight:normal;">0</div>
<div class="t" style="left:819.3px;top:357.3px;font-size:11px;transform:scaleX(0.82);color:#000;font-weight:normal;">0</div>
<div class="t" style="left:734.4px;top:376.0px;font-size:11px;transform:scaleX(0.82);color:#000;font-weight:normal;">0</div>
<div class="t" style="left:819.3px;top:376.0px;font-size:11px;transform:scaleX(0.82);color:#000;font-weight:normal;">0</div>
<div class="t" style="left:734.4px;top:394.7px;font-size:11px;transform:scaleX(0.82);color:#000;font-weight:normal;">0</div>
<div class="t" style="left:819.3px;top:394.7px;font-size:11px;transform:scaleX(0.82);color:#000;font-weight:normal;">0</div>
<div class="t" style="left:734.4px;top:413.4px;font-size:11px;transform:scaleX(0.82);color:#000;font-weight:normal;">0</div>
<div class="t" style="left:819.3px;top:413.4px;font-size:11px;transform:scaleX(0.82);color:#000;font-weight:normal;">0</div>
<div class="r" style="left:0.0px;top:452.0px;width:1023.0px;height:23.5px;background:#f0f0f0;border-top:1px solid #dadada;border-bottom:1.5px solid #5a5a5a;box-sizing:border-box"></div>
<div class="r" style="left:0.0px;top:452.0px;width:1.0px;height:23.0px;background:#fafafa"></div>
<div class="r" style="left:77.7px;top:455.0px;width:1.3px;height:18.0px;background:#a9a9a9"></div>
<div class="r" style="left:321.5px;top:455.0px;width:1.3px;height:18.0px;background:#a9a9a9"></div>
<div class="r" style="left:373.8px;top:455.0px;width:1.3px;height:18.0px;background:#a9a9a9"></div>
<div class="r" style="left:426.0px;top:455.0px;width:1.3px;height:18.0px;background:#a9a9a9"></div>
<div class="r" style="left:511.5px;top:455.0px;width:1.3px;height:18.0px;background:#a9a9a9"></div>
<div class="r" style="left:577.4px;top:455.0px;width:1.3px;height:18.0px;background:#a9a9a9"></div>
<div class="r" style="left:662.8px;top:455.0px;width:1.3px;height:18.0px;background:#a9a9a9"></div>
<div class="r" style="left:714.9px;top:455.0px;width:1.3px;height:18.0px;background:#a9a9a9"></div>
<div class="r" style="left:782.6px;top:455.0px;width:1.3px;height:18.0px;background:#a9a9a9"></div>
<div class="r" style="left:182.6px;top:454.4px;width:68.8px;height:18.8px;background:#007a00"></div>
<div class="r" style="left:256.8px;top:454.7px;width:63.2px;height:18.7px;background:#007a00"></div>
<div class="t" style="left:185.7px;top:458.6px;font-size:11px;transform:scaleX(0.9359204921911973);color:#000;font-weight:normal;">Normal Mode</div>
<div class="t" style="left:259.2px;top:458.6px;font-size:11px;transform:scaleX(0.9024826216484607);color:#000;font-weight:normal;">Error Normal</div>
<div class="t" style="left:3.0px;top:458.6px;font-size:11px;transform:scaleX(0.9150326797385621);color:#000;font-weight:normal;">Tool Connected</div>
<div class="t" style="left:109.5px;top:458.6px;font-size:11px;transform:scaleX(0.8488918737407656);color:#000;font-weight:normal;">500 Kbps</div>
<div class="t" style="left:327.4px;top:458.6px;font-size:11px;transform:scaleX(0.7909685086155674);color:#000;font-weight:normal;">TX ERR: 4</div>
<div class="t" style="left:379.3px;top:458.6px;font-size:11px;transform:scaleX(0.7786295005807201);color:#000;font-weight:normal;">RX ERR: 0</div>
<div class="t" style="left:432.0px;top:458.6px;font-size:11px;transform:scaleX(0.9345911949685535);color:#000;font-weight:normal;">Termination: ON</div>
<div class="t" style="left:518.3px;top:458.6px;font-size:11px;transform:scaleX(0.8879189399844115);color:#000;font-weight:normal;">Trace Active</div>
<div class="t" style="left:582.8px;top:458.6px;font-size:11px;transform:scaleX(0.916601714731099);color:#000;font-weight:normal;">Logging Inactive</div>
<div class="t" style="left:668.2px;top:458.6px;font-size:11px;transform:scaleX(0.8486416558861578);color:#000;font-weight:normal;">ID in HEX</div>
<div class="t" style="left:720.7px;top:458.6px;font-size:11px;transform:scaleX(0.8739267523647829);color:#000;font-weight:normal;">DATA in HEX</div>
<div class="r" style="left:0.0px;top:475.5px;width:1023.0px;height:423.5px;background:#fff"></div>
<div class="r" style="left:117px;top:486px;width:676px;height:405px;background:#292c30"></div>
<div class="r" style="left:134px;top:840.5px;width:659px;height:47.2px;background:#3a454b"></div>
<div class="r" style="left:117px;top:887.7px;width:676px;height:3px;background:#222529"></div>
<div class="r" style="left:395.2px;top:840.5px;width:2px;height:47.2px;background:#272b30"></div>
<div class="r" style="left:700px;top:840.5px;width:2px;height:47.2px;background:#272b30"></div>
<svg class="r" style="left:0;top:0" width="1023" height="899" viewBox="0 0 1023 899">
<rect x="134" y="501.6" width="635" height="337.69999999999993" fill="#000"/>
<rect x="133.5" y="501.1" width="636" height="338.69999999999993" fill="none" stroke="#4a4b4f" stroke-width="1"/>
<line x1="156.15" y1="501.6" x2="156.15" y2="839.3" stroke="#5c5c5c" stroke-width="1.3" stroke-dasharray="1.3 5.45" stroke-dashoffset="0"/>
<line x1="198.45" y1="501.6" x2="198.45" y2="839.3" stroke="#5c5c5c" stroke-width="1.3" stroke-dasharray="1.3 5.45" stroke-dashoffset="0"/>
<line x1="240.75" y1="501.6" x2="240.75" y2="839.3" stroke="#5c5c5c" stroke-width="1.3" stroke-dasharray="1.3 5.45" stroke-dashoffset="0"/>
<line x1="283.05" y1="501.6" x2="283.05" y2="839.3" stroke="#5c5c5c" stroke-width="1.3" stroke-dasharray="1.3 5.45" stroke-dashoffset="0"/>
<line x1="325.35" y1="501.6" x2="325.35" y2="839.3" stroke="#5c5c5c" stroke-width="1.3" stroke-dasharray="1.3 5.45" stroke-dashoffset="0"/>
<line x1="367.65" y1="501.6" x2="367.65" y2="839.3" stroke="#5c5c5c" stroke-width="1.3" stroke-dasharray="1.3 5.45" stroke-dashoffset="0"/>
<line x1="409.95" y1="501.6" x2="409.95" y2="839.3" stroke="#5c5c5c" stroke-width="1.3" stroke-dasharray="1.3 5.45" stroke-dashoffset="0"/>
<line x1="494.55" y1="501.6" x2="494.55" y2="839.3" stroke="#5c5c5c" stroke-width="1.3" stroke-dasharray="1.3 5.45" stroke-dashoffset="0"/>
<line x1="536.85" y1="501.6" x2="536.85" y2="839.3" stroke="#5c5c5c" stroke-width="1.3" stroke-dasharray="1.3 5.45" stroke-dashoffset="0"/>
<line x1="579.15" y1="501.6" x2="579.15" y2="839.3" stroke="#5c5c5c" stroke-width="1.3" stroke-dasharray="1.3 5.45" stroke-dashoffset="0"/>
<line x1="621.45" y1="501.6" x2="621.45" y2="839.3" stroke="#5c5c5c" stroke-width="1.3" stroke-dasharray="1.3 5.45" stroke-dashoffset="0"/>
<line x1="663.75" y1="501.6" x2="663.75" y2="839.3" stroke="#5c5c5c" stroke-width="1.3" stroke-dasharray="1.3 5.45" stroke-dashoffset="0"/>
<line x1="706.05" y1="501.6" x2="706.05" y2="839.3" stroke="#5c5c5c" stroke-width="1.3" stroke-dasharray="1.3 5.45" stroke-dashoffset="0"/>
<line x1="748.35" y1="501.6" x2="748.35" y2="839.3" stroke="#5c5c5c" stroke-width="1.3" stroke-dasharray="1.3 5.45" stroke-dashoffset="0"/>
<line x1="134" y1="535.37" x2="769" y2="535.37" stroke="#5c5c5c" stroke-width="1.3" stroke-dasharray="1.3 7.16" stroke-dashoffset="3.98"/>
<line x1="134" y1="569.14" x2="769" y2="569.14" stroke="#5c5c5c" stroke-width="1.3" stroke-dasharray="1.3 7.16" stroke-dashoffset="3.98"/>
<line x1="134" y1="602.91" x2="769" y2="602.91" stroke="#5c5c5c" stroke-width="1.3" stroke-dasharray="1.3 7.16" stroke-dashoffset="3.98"/>
<line x1="134" y1="636.68" x2="769" y2="636.68" stroke="#5c5c5c" stroke-width="1.3" stroke-dasharray="1.3 7.16" stroke-dashoffset="3.98"/>
<line x1="134" y1="704.22" x2="769" y2="704.22" stroke="#5c5c5c" stroke-width="1.3" stroke-dasharray="1.3 7.16" stroke-dashoffset="3.98"/>
<line x1="134" y1="737.99" x2="769" y2="737.99" stroke="#5c5c5c" stroke-width="1.3" stroke-dasharray="1.3 7.16" stroke-dashoffset="3.98"/>
<line x1="134" y1="771.76" x2="769" y2="771.76" stroke="#5c5c5c" stroke-width="1.3" stroke-dasharray="1.3 7.16" stroke-dashoffset="3.98"/>
<line x1="134" y1="805.53" x2="769" y2="805.53" stroke="#5c5c5c" stroke-width="1.3" stroke-dasharray="1.3 7.16" stroke-dashoffset="3.98"/>
<line x1="134" y1="503.6" x2="769" y2="503.6" stroke="#5e5e5e" stroke-width="3" stroke-dasharray="1.2 7.26" stroke-dashoffset="3.98"/>
<line x1="134" y1="837.3" x2="769" y2="837.3" stroke="#5e5e5e" stroke-width="3" stroke-dasharray="1.2 7.26" stroke-dashoffset="3.98"/>
<line x1="136" y1="501.6" x2="136" y2="839.3" stroke="#5e5e5e" stroke-width="3" stroke-dasharray="1.2 5.55" stroke-dashoffset="0"/>
<line x1="767" y1="501.6" x2="767" y2="839.3" stroke="#5e5e5e" stroke-width="3" stroke-dasharray="1.2 5.55" stroke-dashoffset="0"/>
<line x1="134" y1="670.45" x2="769" y2="670.45" stroke="#8c8c8c" stroke-width="1"/>
<line x1="134" y1="670.45" x2="769" y2="670.45" stroke="#5a5a5a" stroke-width="5" stroke-dasharray="1 7.46" stroke-dashoffset="3.88"/>
<line x1="452.1" y1="501.6" x2="452.1" y2="839.3" stroke="#3a3a3a" stroke-width="1.6"/>
<line x1="452.1" y1="501.6" x2="452.1" y2="839.3" stroke="#8a8a8a" stroke-width="1.6" stroke-dasharray="1.6 5.15" stroke-dashoffset="0.8"/>
<line x1="452.1" y1="501.6" x2="452.1" y2="839.3" stroke="#505050" stroke-width="6" stroke-dasharray="1 5.75" stroke-dashoffset="0.5"/>
<path d="M134,537 L163,537 M165.3,593 L184.5,593 M185.7,537 L189,537 M191.3,593 L209.8,593 M211,537 L214.5,537 M216.8,593 L222.6,593 M223.8,537 L231,537 M233.3,593 L252,593 M253.2,537 L256,537 M258.3,593 L277.3,593 M278.5,537 L282,537 M284.3,593 L302.2,593 M303.4,537 L306.9,537 M309.2,593 L310.8,593 M312,537 L319.4,537 M321.7,593 L331.9,593 M333.1,537 L336.3,537 M338.6,593 L348.8,593 M350,537 L370.2,537 M372.5,593 L378.8,593 M380,537 L383.2,537 M385.5,593 L391.3,593 M392.5,537 L412.5,537 M414.8,593 L421,593 M422.2,537 L425.4,537 M427.7,593 L446.3,593 M447.5,537 L450.6,537 M452.9,593 L454.9,593 M456.1,537 L463.1,537 M465.4,593 L484.6,593 M485.8,537 L492.4,537 M494.7,593 L513.8,593 M515,537 L518.2,537 M520.5,593 L526.5,593 M527.7,537 L530.7,537 M533,593 L534.9,593 M536.1,537 L538.8,537 M541.1,593 L560.4,593 M561.6,537 L572.9,537 M575.2,593 L581.5,593 M582.7,537 L585.4,537 M587.7,593 L594.5,593 M595.7,537 L607,537 M609.3,593 L628.1,593 M629.3,537 L636.4,537 M638.7,593 L649.2,593 M650.4,537 L657.5,537 M659.8,593 L661.9,593 M663.1,537 L670.3,537 M672.6,593 L679.1,593 M680.3,537 L691.4,537 M693.7,593 L695.8,593 M697,537 L699.7,537 M702,593 L708.5,593 M709.7,537 L717.3,537 M719.5,598 L721.3,598 M722.5,537 L769,537" stroke="#f2f000" stroke-width="3.8" fill="none"/>
<path d="M163,537 L163.4,549 L164.6,598 L165.3,593 M183.7,593 L184.3,563 L184.9,522 L185.9,537 M189,537 L189.4,549 L190.6,598 L191.3,593 M209,593 L209.6,563 L210.2,522 L211.2,537 M214.5,537 L214.9,549 L216.1,598 L216.8,593 M221.8,593 L222.4,563 L223,522 L224,537 M231,537 L231.4,549 L232.6,598 L233.3,593 M251.2,593 L251.8,563 L252.4,522 L253.4,537 M256,537 L256.4,549 L257.6,598 L258.3,593 M276.5,593 L277.1,563 L277.7,522 L278.7,537 M282,537 L282.4,549 L283.6,598 L284.3,593 M301.4,593 L302,563 L302.6,522 L303.6,537 M306.9,537 L307.3,549 L308.5,598 L309.2,593 M310,593 L310.6,563 L311.2,522 L312.2,537 M319.4,537 L319.8,549 L321,598 L321.7,593 M331.1,593 L331.7,563 L332.3,522 L333.3,537 M336.3,537 L336.7,549 L337.9,598 L338.6,593 M348,593 L348.6,563 L349.2,522 L350.2,537 M370.2,537 L370.6,549 L371.8,598 L372.5,593 M378,593 L378.6,563 L379.2,522 L380.2,537 M383.2,537 L383.6,549 L384.8,598 L385.5,593 M390.5,593 L391.1,563 L391.7,522 L392.7,537 M412.5,537 L412.9,549 L414.1,598 L414.8,593 M420.2,593 L420.8,563 L421.4,522 L422.4,537 M425.4,537 L425.8,549 L427,598 L427.7,593 M445.5,593 L446.1,563 L446.7,522 L447.7,537 M450.6,537 L451,549 L452.2,598 L452.9,593 M454.1,593 L454.7,563 L455.3,522 L456.3,537 M463.1,537 L463.5,549 L464.7,598 L465.4,593 M483.8,593 L484.4,563 L485,522 L486,537 M492.4,537 L492.8,549 L494,598 L494.7,593 M513,593 L513.6,563 L514.2,522 L515.2,537 M518.2,537 L518.6,549 L519.8,598 L520.5,593 M525.7,593 L526.3,563 L526.9,522 L527.9,537 M530.7,537 L531.1,549 L532.3,598 L533,593 M534.1,593 L534.7,563 L535.3,522 L536.3,537 M538.8,537 L539.2,549 L540.4,598 L541.1,593 M559.6,593 L560.2,563 L560.8,522 L561.8,537 M572.9,537 L573.3,549 L574.5,598 L575.2,593 M580.7,593 L581.3,563 L581.9,522 L582.9,537 M585.4,537 L585.8,549 L587,598 L587.7,593 M593.7,593 L594.3,563 L594.9,522 L595.9,537 M607,537 L607.4,549 L608.6,598 L609.3,593 M627.3,593 L627.9,563 L628.5,522 L629.5,537 M636.4,537 L636.8,549 L638,598 L638.7,593 M648.4,593 L649,563 L649.6,522 L650.6,537 M657.5,537 L657.9,549 L659.1,598 L659.8,593 M661.1,593 L661.7,563 L662.3,522 L663.3,537 M670.3,537 L670.7,549 L671.9,598 L672.6,593 M678.3,593 L678.9,563 L679.5,522 L680.5,537 M691.4,537 L691.8,549 L693,598 L693.7,593 M695,593 L695.6,563 L696.2,522 L697.2,537 M699.7,537 L700.1,549 L701.3,598 L702,593 M707.7,593 L708.3,563 L708.9,522 L709.9,537 M717.3,537 L717.8,549 L719.1,607.5 L719.5,598 M721,598 L721.3,540 L721.6,532 L722.5,537" stroke="#f2f000" stroke-width="1.5" fill="none" stroke-linejoin="round"/>
<path d="M134,711 L163,711 L163.5,760.5 L164,724 L164.8,717.5 L166.2,714.6 L184.5,714.6 L184.8,706.5 L185.7,711 L189,711 L189.5,755 L190,724 L190.8,717.5 L192.2,714.6 L209.8,714.6 L210.1,706.5 L211,711 L214.5,711 L215,755 L215.5,724 L216.3,717.5 L217.7,714.6 L222.6,714.6 L222.9,706.5 L223.8,711 L231,711 L231.5,759 L232,724 L232.8,717.5 L234.2,714.6 L252,714.6 L252.3,706.5 L253.2,711 L256,711 L256.5,755 L257,724 L257.8,717.5 L259.2,714.6 L277.3,714.6 L277.6,706.5 L278.5,711 L282,711 L282.5,755 L283,724 L283.8,717.5 L285.2,714.6 L302.2,714.6 L302.5,706.5 L303.4,711 L306.9,711 L307.4,755 L307.9,724 L308.7,717.5 L310.1,714.6 L310.8,714.6 L311.1,706.5 L312,711 L319.4,711 L319.9,759 L320.4,724 L321.2,717.5 L322.6,714.6 L331.9,714.6 L332.2,706.5 L333.1,711 L336.3,711 L336.8,755 L337.3,724 L338.1,717.5 L339.5,714.6 L348.8,714.6 L349.1,706.5 L350,711 L370.2,711 L370.7,759 L371.2,724 L372,717.5 L373.4,714.6 L378.8,714.6 L379.1,706.5 L380,711 L383.2,711 L383.7,755 L384.2,724 L385,717.5 L386.4,714.6 L391.3,714.6 L391.6,706.5 L392.5,711 L412.5,711 L413,759 L413.5,724 L414.3,717.5 L415.7,714.6 L421,714.6 L421.3,706.5 L422.2,711 L425.4,711 L425.9,755 L426.4,724 L427.2,717.5 L428.6,714.6 L446.3,714.6 L446.6,706.5 L447.5,711 L450.6,711 L451.1,755 L451.6,724 L452.4,717.5 L453.8,714.6 L454.9,714.6 L455.2,706.5 L456.1,711 L463.1,711 L463.6,759 L464.1,724 L464.9,717.5 L466.3,714.6 L484.6,714.6 L484.9,706.5 L485.8,711 L492.4,711 L492.9,759 L493.4,724 L494.2,717.5 L495.6,714.6 L513.8,714.6 L514.1,706.5 L515,711 L518.2,711 L518.7,755 L519.2,724 L520,717.5 L521.4,714.6 L526.5,714.6 L526.8,706.5 L527.7,711 L530.7,711 L531.2,755 L531.7,724 L532.5,717.5 L533.9,714.6 L534.9,714.6 L535.2,706.5 L536.1,711 L538.8,711 L539.3,755 L539.8,724 L540.6,717.5 L542,714.6 L560.4,714.6 L560.7,706.5 L561.6,711 L572.9,711 L573.4,759 L573.9,724 L574.7,717.5 L576.1,714.6 L581.5,714.6 L581.8,706.5 L582.7,711 L585.4,711 L585.9,755 L586.4,724 L587.2,717.5 L588.6,714.6 L594.5,714.6 L594.8,706.5 L595.7,711 L607,711 L607.5,759 L608,724 L608.8,717.5 L610.2,714.6 L628.1,714.6 L628.4,706.5 L629.3,711 L636.4,711 L636.9,759 L637.4,724 L638.2,717.5 L639.6,714.6 L649.2,714.6 L649.5,706.5 L650.4,711 L657.5,711 L658,759 L658.5,724 L659.3,717.5 L660.7,714.6 L661.9,714.6 L662.2,706.5 L663.1,711 L670.3,711 L670.8,759 L671.3,724 L672.1,717.5 L673.5,714.6 L679.1,714.6 L679.4,706.5 L680.3,711 L691.4,711 L691.9,759 L692.4,724 L693.2,717.5 L694.6,714.6 L695.8,714.6 L696.1,706.5 L697,711 L699.7,711 L700.2,755 L700.7,724 L701.5,717.5 L702.9,714.6 L708.5,714.6 L708.8,706.5 L709.7,711 L717.3,711 L717.6,779 L718.1,773 L721.3,773 L721.3,773 L721.6,708 L722.5,711 L769,711" stroke="#19d0e0" stroke-width="1.4" fill="none" stroke-linejoin="round"/>
<path d="M134,711 L163,711 M166.2,714.6 L184.5,714.6 M185.7,711 L189,711 M192.2,714.6 L209.8,714.6 M211,711 L214.5,711 M217.7,714.6 L222.6,714.6 M223.8,711 L231,711 M234.2,714.6 L252,714.6 M253.2,711 L256,711 M259.2,714.6 L277.3,714.6 M278.5,711 L282,711 M285.2,714.6 L302.2,714.6 M303.4,711 L306.9,711 M310.1,714.6 L310.8,714.6 M312,711 L319.4,711 M322.6,714.6 L331.9,714.6 M333.1,711 L336.3,711 M339.5,714.6 L348.8,714.6 M350,711 L370.2,711 M373.4,714.6 L378.8,714.6 M380,711 L383.2,711 M386.4,714.6 L391.3,714.6 M392.5,711 L412.5,711 M415.7,714.6 L421,714.6 M422.2,711 L425.4,711 M428.6,714.6 L446.3,714.6 M447.5,711 L450.6,711 M453.8,714.6 L454.9,714.6 M456.1,711 L463.1,711 M466.3,714.6 L484.6,714.6 M485.8,711 L492.4,711 M495.6,714.6 L513.8,714.6 M515,711 L518.2,711 M521.4,714.6 L526.5,714.6 M527.7,711 L530.7,711 M533.9,714.6 L534.9,714.6 M536.1,711 L538.8,711 M542,714.6 L560.4,714.6 M561.6,711 L572.9,711 M576.1,714.6 L581.5,714.6 M582.7,711 L585.4,711 M588.6,714.6 L594.5,714.6 M595.7,711 L607,711 M610.2,714.6 L628.1,714.6 M629.3,711 L636.4,711 M639.6,714.6 L649.2,714.6 M650.4,711 L657.5,711 M660.7,714.6 L661.9,714.6 M663.1,711 L670.3,711 M673.5,714.6 L679.1,714.6 M680.3,711 L691.4,711 M694.6,714.6 L695.8,714.6 M697,711 L699.7,711 M702.9,714.6 L708.5,714.6 M709.7,711 L717.3,711 M722.5,711 L769,711" stroke="#19d0e0" stroke-width="2.3" fill="none"/>
<path d="M447.5,502 L456.7,502 L452.1,507.5 Z" fill="#f7a01a"/>
<path d="M203.8,508.5 Q203.8,506.6 205.7,506.6 L212.2,506.6 Q214.1,506.6 214.1,508.5 L214.1,518 L209,521.5 L203.8,518 Z" fill="#f7941d"/>
<path d="M206,509.3 L212,509.3 L212,511.3 L210,511.3 L210,518 L208,518 L208,511.3 L206,511.3 Z" fill="#000"/>
<path d="M758.6,597.8 L764.6,592.6 L764.2,596.5 L769,596.5 L769,599.1 L764.2,599.1 L764.6,603 Z" fill="#f2f000"/>
<path d="M125,600.8 L133,605.8 L125,610.8 Z" fill="none" stroke="#f2f000" stroke-width="1.3"/>
<path d="M124.5,762 L133.5,767.3 L124.5,772.6 Z" fill="#19d0e0"/>
<rect x="257.5" y="486.5" width="388" height="12.7" fill="#000" stroke="#5c5c5c" stroke-width="1"/>
<line x1="334.5" y1="492.3" x2="567.9" y2="492.3" stroke="#17a9b8" stroke-width="1.3"/>
<path d="M448,486.5 L456,486.5 L452,490 Z" fill="#f7a01a"/>
<path d="M448,489 Q448,488 449,488 L455,488 Q456,488 456,489 L456,496 L452,499 L448,496 Z" fill="#f7941d"/>
<path d="M449.5,490 L454.5,490 L454.5,491.3 L452.7,491.3 L452.7,496 L451.3,496 L451.3,491.3 L449.5,491.3 Z" fill="#222"/>
<g stroke="#3d4a52" stroke-width="1.3" fill="none"><path d="M671.5,492 Q678,485.5 684.5,492"/><path d="M673.8,494.3 Q678,490.3 682.2,494.3"/><path d="M676,496.3 Q678,494.8 680,496.3"/></g>
<circle cx="678" cy="498" r="1.1" fill="#3d4a52"/>
<g stroke="#3d4a52" stroke-width="1.1" fill="none"><rect x="705.8" y="488.3" width="5.6" height="3.4"/><rect x="701.8" y="495.3" width="5.6" height="3.4"/><rect x="710.3" y="495.3" width="5.6" height="3.4"/><path d="M708.6,491.7 V493.5 M704.6,493.5 H713.1 M704.6,493.5 V495.3 M713.1,493.5 V495.3"/></g>
<g stroke="#3d4a52" stroke-width="1.2" fill="none"><path d="M738,489.8 H733.8 V498.3 H744.3 V493"/><path d="M741,495 V488 M738.6,490.3 L741,487.8 L743.4,490.3"/></g>
<circle cx="767.4" cy="493.5" r="5.6" fill="none" stroke="#ececec" stroke-width="1.2"/>
<rect x="140" y="847.3" width="30.7" height="14.7" fill="#f2f000"/>
<rect x="271" y="847.3" width="30.8" height="14.7" fill="#19d2e2"/>
<rect x="598.9" y="846.9" width="25.7" height="13.8" fill="#f2f000"/>
<path d="M629,861 L633,861 L637.5,848.5 L641,848.5" stroke="#e0e020" stroke-width="1.4" fill="none"/>
<path d="M405,873.8 L412.5,873.8 L412.5,871 L419.5,875.9 L412.5,880.8 L412.5,878 L405,878 Z" fill="#f7a01a"/>
<path d="M417.6,868.6 L424,868.6 L420.8,872 Z" fill="#f7a01a"/>
</svg>
<div class="t" style="left:120.8px;top:486.2px;font-size:14px;transform:scaleX(0.84);color:#f2f2f2;font-weight:bold;">Tek</div>
<div class="t" style="left:150.5px;top:488.4px;font-size:11.5px;transform:scaleX(0.95);color:#c9cec9;font-weight:normal;">PreVu</div>
<div class="t" style="left:118.3px;top:600.8px;font-size:10px;transform:scaleX(0.85);color:#f2f000;font-weight:normal;">1</div>
<div class="t" style="left:118.3px;top:762.8px;font-size:10px;transform:scaleX(0.85);color:#19d2e2;font-weight:normal;">2</div>
<div class="t" style="left:764.6px;top:489.0px;font-size:10px;transform:scaleX(1);color:#ececec;font-weight:normal;">?</div>
<div class="t" style="left:142.5px;top:848.8px;font-size:12.5px;transform:scaleX(0.9);color:#000;font-weight:normal;-webkit-text-stroke:0.35px #000;">CH1</div>
<div class="t" style="left:191.2px;top:848.8px;font-size:12.5px;transform:scaleX(0.92);color:#e6e61e;font-weight:normal;-webkit-text-stroke:0.35px #e6e61e;">2.00V</div>
<div class="t" style="left:273.5px;top:848.8px;font-size:12.5px;transform:scaleX(0.9);color:#000;font-weight:normal;-webkit-text-stroke:0.35px #000;">CH2</div>
<div class="t" style="left:322.6px;top:848.8px;font-size:12.5px;transform:scaleX(0.92);color:#19c8d8;font-weight:normal;-webkit-text-stroke:0.35px #19c8d8;">2.00V</div>
<div class="t" style="left:242.3px;top:850.3px;font-size:8.5px;transform:scaleX(0.85);color:#e6e614;font-weight:bold;">B</div>
<div class="t" style="left:245.9px;top:854.5px;font-size:7.5px;transform:scaleX(0.75);color:#e6e614;font-weight:bold;">W</div>
<div class="t" style="left:372.9px;top:850.3px;font-size:8.5px;transform:scaleX(0.85);color:#19c8d8;font-weight:bold;">B</div>
<div class="t" style="left:376.5px;top:854.5px;font-size:7.5px;transform:scaleX(0.75);color:#19c8d8;font-weight:bold;">W</div>
<div class="t" style="left:405.5px;top:849.3px;font-size:12.5px;transform:scaleX(0.92);color:#dedede;font-weight:normal;-webkit-text-stroke:0.35px #dedede;">20.0µs</div>
<div class="t" style="left:427.0px;top:871.9px;font-size:12.5px;transform:scaleX(0.92);color:#f7a01a;font-weight:normal;-webkit-text-stroke:0.35px #f7a01a;">114.400µs</div>
<div class="t" style="left:517.0px;top:849.3px;font-size:12.5px;transform:scaleX(0.92);color:#dedede;font-weight:normal;-webkit-text-stroke:0.35px #dedede;">500MS/s</div>
<div class="t" style="left:517.0px;top:871.9px;font-size:12.5px;transform:scaleX(0.92);color:#dedede;font-weight:normal;-webkit-text-stroke:0.35px #dedede;">20M points</div>
<div class="t" style="left:600.5px;top:848.6px;font-size:11.5px;transform:scaleX(0.88);color:#000;font-weight:normal;-webkit-text-stroke:0.35px #000;">CH1</div>
<div class="t" style="left:646.4px;top:848.6px;font-size:12.5px;transform:scaleX(0.92);color:#e6e61e;font-weight:normal;-webkit-text-stroke:0.35px #e6e61e;">500mV</div>
<div class="t" style="left:599.7px;top:871.9px;font-size:12.5px;transform:scaleX(0.92);color:#e6e61e;font-weight:normal;-webkit-text-stroke:0.35px #e6e61e;">&lt;10Hz</div>
<div class="t" style="left:710.5px;top:849.3px;font-size:12.5px;transform:scaleX(0.92);color:#dedede;font-weight:normal;-webkit-text-stroke:0.35px #dedede;">20:30:20</div>
<div class="t" style="left:710.5px;top:871.9px;font-size:12.5px;transform:scaleX(0.92);color:#dedede;font-weight:normal;-webkit-text-stroke:0.35px #dedede;">27 Oct 2017</div>
<svg class="r" style="left:0;top:0" width="1023" height="899"><line x1="224" y1="204" x2="249.5" y2="253" stroke="#ed1c24" stroke-width="1"/><line x1="291" y1="205" x2="314.6" y2="256.5" stroke="#22b14c" stroke-width="1"/><line x1="462.3" y1="206" x2="497.1" y2="256" stroke="#ff7f27" stroke-width="1.2"/><polyline points="487.5,293.9 472,516" stroke="#1fa2e0" stroke-width="1.2" fill="none"/><polyline points="465.3,500 472,516 478.7,500" stroke="#1fa2e0" stroke-width="1.2" fill="none"/></svg>
<div class="r" style="left:186.2px;top:177.6px;width:45.2px;height:26.4px;border:4px solid #ed1c24;box-sizing:border-box"></div>
<div class="r" style="left:271.5px;top:179.4px;width:35.2px;height:25.5px;border:4px solid #22b14c;box-sizing:border-box"></div>
<div class="r" style="left:302.3px;top:180.0px;width:375.0px;height:26.0px;border:4px solid #ff7f27;box-sizing:border-box"></div>
<div class="r" style="left:226.1px;top:255.6px;width:42.4px;height:26.2px;border:4px solid #ed1c24;box-sizing:border-box"></div>
<div class="r" style="left:307.9px;top:256.3px;width:44.5px;height:24.8px;border:4px solid #22b14c;box-sizing:border-box"></div>
<div class="r" style="left:356.0px;top:256.0px;width:377.2px;height:24.3px;border:4px solid #ff7f27;box-sizing:border-box"></div>
<div class="r" style="left:177.8px;top:449.8px;width:79.0px;height:25.5px;border:4px solid #ed1c24;border-bottom:0;box-sizing:border-box"></div>
</body></html>
